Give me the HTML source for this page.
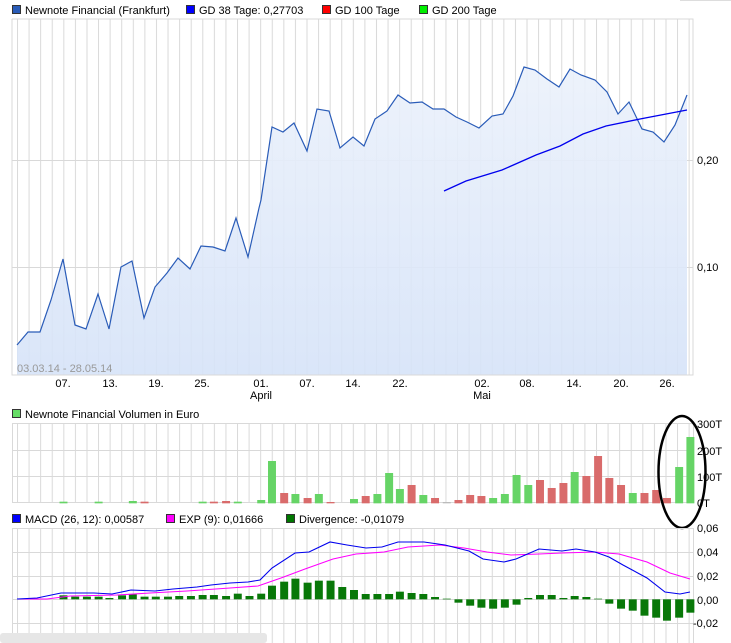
<!DOCTYPE html>
<html><head><meta charset="utf-8"><style>
html,body{margin:0;padding:0;background:#fff;}
svg{display:block;font-family:"Liberation Sans",sans-serif;}
</style></head><body>
<svg width="731" height="643" viewBox="0 0 731 643" xmlns="http://www.w3.org/2000/svg">
<defs>
<pattern id="vg" x="17" y="0" width="11.58" height="643" patternUnits="userSpaceOnUse">
<line x1="0.5" y1="0" x2="0.5" y2="643" stroke="#d9d9d9" stroke-width="1"/>
</pattern>
<linearGradient id="fg" x1="0" y1="0" x2="0" y2="1">
<stop offset="0" stop-color="#ebf1fb"/><stop offset="1" stop-color="#d6e3f8"/>
</linearGradient>
</defs>
<line x1="680" y1="0.5" x2="731" y2="0.5" stroke="#ddd"/>
<!-- legend top -->
<g font-size="11" fill="#000">
<rect x="12.5" y="5.5" width="8" height="8" fill="#2a5cb8" stroke="#333"/><text x="25" y="14">Newnote Financial (Frankfurt)</text>
<rect x="186.5" y="5.5" width="8" height="8" fill="#0000ff" stroke="#333"/><text x="199" y="14">GD 38 Tage: 0,27703</text>
<rect x="322.5" y="5.5" width="8" height="8" fill="#ff0000" stroke="#333"/><text x="335" y="14">GD 100 Tage</text>
<rect x="419.5" y="5.5" width="8" height="8" fill="#00ee00" stroke="#333"/><text x="432" y="14">GD 200 Tage</text>
</g>
<!-- main chart -->
<rect x="12" y="19" width="681" height="356" fill="url(#vg)"/>
<line x1="12" y1="160.5" x2="693" y2="160.5" stroke="#d9d9d9"/>
<line x1="12" y1="267.5" x2="693" y2="267.5" stroke="#d9d9d9"/>
<polygon fill="url(#fg)" fill-opacity="0.9" points="17,375 17,345 28,332 40,332 51,300 63,259 75,325 86,329 98,294 109,329 121,267 132,261 144,318 155,287 167,273 178,258 190,269 201,246 213,247 225,251 236,218 248,257 259,208 261,200 272,127 283,132 294,123 307,151 317,109 329,111 340,148 353,137 364,146 375,119 387,111 398,95 410,103 422,102 433,109 444,109 456,117 467,122 479,128 492,116 503,114 513,96 524,67 535,70 547,79 559,87 570,69 581,75 595,80 607,92 618,114 629,102 642,129 653,132 664,142 675,125 687,95 687,375"/>
<polyline fill="none" stroke="#2a5cb8" stroke-width="1.2" points="17,345 28,332 40,332 51,300 63,259 75,325 86,329 98,294 109,329 121,267 132,261 144,318 155,287 167,273 178,258 190,269 201,246 213,247 225,251 236,218 248,257 259,208 261,200 272,127 283,132 294,123 307,151 317,109 329,111 340,148 353,137 364,146 375,119 387,111 398,95 410,103 422,102 433,109 444,109 456,117 467,122 479,128 492,116 503,114 513,96 524,67 535,70 547,79 559,87 570,69 581,75 595,80 607,92 618,114 629,102 642,129 653,132 664,142 675,125 687,95"/>
<polyline fill="none" stroke="#0000ee" stroke-width="1.3" points="444,191 466,181 502,170 536,155 560,146 583,134 606,126 640,119 687,110"/>
<polyline fill="none" stroke="#d9d9d9" points="12,19 693,19 693,375 12,375 12,19"/>
<text x="17" y="372" font-size="11" fill="#999">03.03.14 - 28.05.14</text>
<g font-size="11" fill="#000" text-anchor="middle">
<text x="63" y="387">07.</text><text x="110" y="387">13.</text><text x="156" y="387">19.</text><text x="202" y="387">25.</text>
<text x="261" y="387">01.</text><text x="261" y="399">April</text>
<text x="307" y="387">07.</text><text x="353" y="387">14.</text><text x="400" y="387">22.</text>
<text x="482" y="387">02.</text><text x="482" y="399">Mai</text>
<text x="527" y="387">08.</text><text x="574" y="387">14.</text><text x="621" y="387">20.</text><text x="667" y="387">26.</text>
</g>
<g font-size="11" fill="#000"><text x="697" y="164">0,20</text><text x="697" y="271">0,10</text></g>
<!-- volume -->
<g font-size="11"><rect x="12.5" y="409.5" width="8" height="8" fill="#66dd66" stroke="#333"/><text x="25" y="418">Newnote Financial Volumen in Euro</text></g>
<rect x="12" y="423" width="681" height="80" fill="url(#vg)"/>
<g stroke="#d9d9d9"><line x1="12" y1="423.5" x2="693" y2="423.5"/><line x1="12" y1="450.5" x2="693" y2="450.5"/><line x1="12" y1="476.5" x2="693" y2="476.5"/><line x1="12" y1="502.5" x2="693" y2="502.5"/><line x1="12.5" y1="423" x2="12.5" y2="503"/><line x1="693.5" y1="423" x2="693.5" y2="503"/></g>
<g transform="translate(0,360) scale(0.46854,0.33333)">
<g fill="#66d466">
<rect x="127" y="425" width="17" height="5"/><rect x="202" y="425" width="17" height="5"/><rect x="275" y="423" width="17" height="7"/><rect x="424" y="425" width="17" height="5"/><rect x="499" y="425" width="17" height="5"/><rect x="549" y="420" width="17" height="10"/><rect x="572" y="303" width="17" height="127"/><rect x="622" y="402" width="17" height="28"/><rect x="672" y="402" width="17" height="28"/><rect x="747" y="417" width="17" height="13"/><rect x="797" y="402" width="17" height="28"/><rect x="822" y="339" width="17" height="91"/><rect x="845" y="387" width="17" height="43"/><rect x="895" y="405" width="17" height="25"/><rect x="1044" y="414" width="17" height="16"/><rect x="1069" y="402" width="17" height="28"/><rect x="1094" y="345" width="17" height="85"/><rect x="1119" y="375" width="17" height="55"/><rect x="1218" y="336" width="17" height="94"/><rect x="1342" y="399" width="17" height="31"/><rect x="1441" y="321" width="17" height="109"/><rect x="1465" y="231" width="17" height="199"/>
</g>
<g fill="#d96b6b">
<rect x="300" y="425" width="17" height="5"/><rect x="448" y="425" width="17" height="5"/><rect x="474" y="423" width="17" height="7"/><rect x="598" y="399" width="17" height="31"/><rect x="648" y="414" width="17" height="16"/><rect x="697" y="426" width="17" height="4"/><rect x="772" y="408" width="17" height="22"/><rect x="870" y="375" width="17" height="55"/><rect x="920" y="414" width="17" height="16"/><rect x="970" y="420" width="17" height="10"/><rect x="995" y="405" width="17" height="25"/><rect x="1019" y="408" width="17" height="22"/><rect x="1144" y="360" width="17" height="70"/><rect x="1169" y="384" width="17" height="46"/><rect x="1194" y="369" width="17" height="61"/><rect x="1243" y="348" width="17" height="82"/><rect x="1268" y="288" width="17" height="142"/><rect x="1292" y="354" width="17" height="76"/><rect x="1317" y="375" width="17" height="55"/><rect x="1367" y="399" width="17" height="31"/><rect x="1392" y="390" width="17" height="40"/><rect x="1415" y="414" width="17" height="16"/>
</g>
<rect x="945" y="426" width="17" height="4" fill="#bbb"/>
</g>
<g font-size="11" fill="#000"><text x="697" y="428">300T</text><text x="697" y="455">200T</text><text x="697" y="481">100T</text><text x="697" y="507">0T</text></g>
<ellipse cx="682" cy="472" rx="23.5" ry="56" fill="none" stroke="#000" stroke-width="2.5"/>
<!-- MACD -->
<g font-size="11">
<rect x="12.5" y="514.5" width="8" height="8" fill="#0000ff" stroke="#333"/><text x="25" y="523">MACD (26, 12): 0,00587</text>
<rect x="166.5" y="514.5" width="8" height="8" fill="#ff00ff" stroke="#333"/><text x="179" y="523">EXP (9): 0,01666</text>
<rect x="286.5" y="514.5" width="8" height="8" fill="#007700" stroke="#333"/><text x="299" y="523">Divergence: -0,01079</text>
</g>
<rect x="12" y="528" width="681" height="115" fill="url(#vg)"/>
<g stroke="#d9d9d9"><line x1="12" y1="528.5" x2="693" y2="528.5"/><line x1="12" y1="552.5" x2="693" y2="552.5"/><line x1="12" y1="576.5" x2="693" y2="576.5"/><line x1="12" y1="599.5" x2="693" y2="599.5"/><line x1="12" y1="623.5" x2="693" y2="623.5"/><line x1="12.5" y1="528" x2="12.5" y2="643"/><line x1="693.5" y1="528" x2="693.5" y2="643"/></g>
<g transform="translate(0,360) scale(0.46854,0.33333)" fill="#087808">
<rect x="127" y="706" width="17" height="12"/><rect x="152" y="710" width="17" height="8"/><rect x="177" y="710" width="17" height="8"/><rect x="202" y="710" width="17" height="8"/><rect x="225" y="714" width="17" height="4"/><rect x="252" y="706" width="17" height="12"/><rect x="275" y="703" width="17" height="15"/><rect x="300" y="710" width="17" height="8"/><rect x="324" y="710" width="17" height="8"/><rect x="350" y="710" width="17" height="8"/><rect x="374" y="708" width="17" height="10"/><rect x="399" y="708" width="17" height="10"/><rect x="424" y="705" width="17" height="13"/><rect x="448" y="705" width="17" height="13"/><rect x="474" y="708" width="17" height="10"/><rect x="499" y="701" width="17" height="17"/><rect x="524" y="708" width="17" height="10"/><rect x="549" y="701" width="17" height="17"/><rect x="572" y="677" width="17" height="41"/><rect x="598" y="665" width="17" height="53"/><rect x="622" y="656" width="17" height="62"/><rect x="648" y="668" width="17" height="50"/><rect x="672" y="662" width="17" height="56"/><rect x="697" y="662" width="17" height="56"/><rect x="722" y="681" width="17" height="37"/><rect x="747" y="690" width="17" height="28"/><rect x="772" y="702" width="17" height="16"/><rect x="797" y="702" width="17" height="16"/><rect x="822" y="702" width="17" height="16"/><rect x="845" y="695" width="17" height="23"/><rect x="870" y="699" width="17" height="19"/><rect x="895" y="702" width="17" height="16"/><rect x="920" y="711" width="17" height="7"/><rect x="945" y="716" width="17" height="2"/>
<rect x="970" y="718" width="17" height="10"/><rect x="995" y="718" width="17" height="19"/><rect x="1019" y="718" width="17" height="25"/><rect x="1044" y="718" width="17" height="28"/><rect x="1069" y="718" width="17" height="25"/><rect x="1094" y="718" width="17" height="16"/>
<rect x="1119" y="714" width="17" height="4"/><rect x="1144" y="705" width="17" height="13"/><rect x="1169" y="705" width="17" height="13"/><rect x="1194" y="714" width="17" height="4"/><rect x="1218" y="708" width="17" height="10"/><rect x="1243" y="711" width="17" height="7"/><rect x="1268" y="716" width="17" height="2"/>
<rect x="1292" y="718" width="17" height="13"/><rect x="1317" y="718" width="17" height="28"/><rect x="1342" y="718" width="17" height="34"/><rect x="1367" y="718" width="17" height="49"/><rect x="1392" y="718" width="17" height="55"/><rect x="1415" y="718" width="17" height="64"/><rect x="1441" y="718" width="17" height="55"/><rect x="1465" y="718" width="17" height="40"/>
</g>
<polyline fill="none" stroke="#ff00ff" stroke-width="1.1" points="17,599 47,599 70,596 117,595 150,593 187,591 230,588 258,586 281,578 305,569 333,559 356,554 384,552 408,547 440,545 464,548 487,552 511,555 539,554 562,553 595,552 619,554 647,562 670,573 690,579"/>
<polyline fill="none" stroke="#0000ee" stroke-width="1.1" points="17,599 37,598 61,593 75,593 94,593 112,594 131,590 155,591 173,589 197,587 211,585 230,583 248,582 260,580 272,568 295,553 309,552 330,542 347,545 366,548 382,547 398,542 424,542 445,545 469,551 483,559 504,562 516,559 539,549 562,551 576,549 595,552 609,557 623,565 647,578 665,592 680,594 690,592"/>
<g font-size="11" fill="#000"><text x="697" y="556">0,04</text><text x="697" y="580">0,02</text><text x="697" y="604">0,00</text><text x="693" y="627">-0,02</text><text x="697" y="532">0,06</text></g>
<rect x="0" y="633" width="267" height="10" rx="3" fill="#e6e6e6"/>
</svg>
</body></html>
